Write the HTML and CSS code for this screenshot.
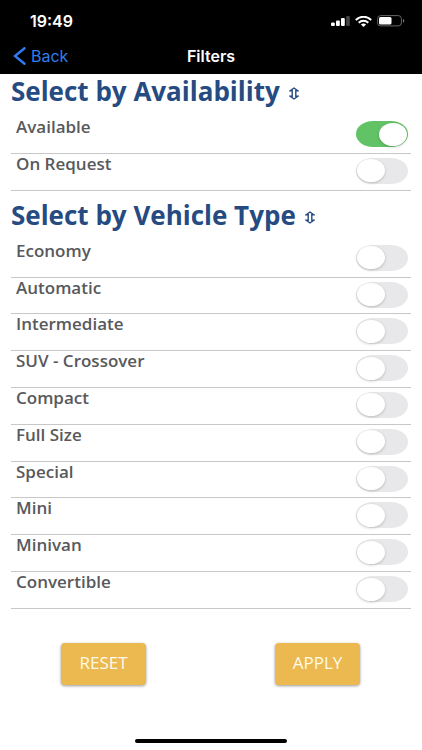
FILE: index.html
```html
<!DOCTYPE html>
<html lang="en">
<head>
<meta charset="utf-8">
<meta name="viewport" content="width=device-width, initial-scale=1">
<title>Filters</title>
<link rel="stylesheet" href="styles.css">
</head>
<body>
<header class="top">
  <div class="status">
    <span class="time">19:49</span>
    <div class="indicators">
      <svg width="19" height="10" viewBox="0 0 19 10" aria-hidden="true"><g fill="#fff"><rect y="6.500" width="3.800" height="3.500" rx="1"/><rect x="5" y="4.500" width="3.800" height="5.500" rx="1"/><rect x="10" y="2" width="3.800" height="8" rx="1"/></g><rect x="15.200" width="3.600" height="10" rx="1" fill="#444"/></svg>
      <svg width="17" height="11" viewBox="0 0 17 11" aria-hidden="true"><g fill="none" stroke="#fff" stroke-width="2"><path d="M.8 4C5-.3 12-.3 16.200 4"/><path d="M3.700 6.700c2.700-2.600 6.900-2.600 9.600 0"/></g><path fill="#fff" d="M5.900 8.500c1.500-1.300 3.700-1.300 5.200 0L8.500 11z"/></svg>
      <svg width="28" height="12" viewBox="0 0 28 12" aria-hidden="true"><rect x=".6" y=".6" width="23.800" height="10.300" rx="3" fill="none" stroke="#666"/><rect x="2" y="2" width="12.500" height="7.500" rx="1.500" fill="#fff"/><path d="M26 4c1.800.5 1.800 3.200 0 3.700z" fill="#777"/></svg>
    </div>
  </div>
  <nav class="bar">
    <a class="back" href="#"><svg width="13" height="18" viewBox="0 0 13 18" aria-hidden="true"><path d="M11.500 1.200 2 9l9.500 7.800" fill="none" stroke="#2f7df0" stroke-width="2.400" stroke-linecap="round"/></svg>Back</a>
    <h1 class="title">Filters</h1>
  </nav>
</header>
<main class="content">
  <h2 class="heading">Select by Availability <svg class="sort" width="10" height="13" viewBox="0 0 10 13" aria-hidden="true"><path d="M5 1 1.200 3.800h2v5.400h-2L5 12l3.800-2.800h-2V3.800h2z"/></svg></h2>
  <ul class="list availability">
    <li class="row"><label for="f1">Available</label><input class="switch" id="f1" type="checkbox" checked></li>
    <li class="row"><label for="f2">On Request</label><input class="switch" id="f2" type="checkbox"></li>
  </ul>
  <h2 class="heading next">Select by Vehicle Type <svg class="sort" width="10" height="13" viewBox="0 0 10 13" aria-hidden="true"><path d="M5 1 1.200 3.800h2v5.400h-2L5 12l3.800-2.800h-2V3.800h2z"/></svg></h2>
  <ul class="list vehicles">
    <li class="row"><label for="v1">Economy</label><input class="switch" id="v1" type="checkbox"></li>
    <li class="row"><label for="v2">Automatic</label><input class="switch" id="v2" type="checkbox"></li>
    <li class="row"><label for="v3">Intermediate</label><input class="switch" id="v3" type="checkbox"></li>
    <li class="row"><label for="v4">SUV - Crossover</label><input class="switch" id="v4" type="checkbox"></li>
    <li class="row"><label for="v5">Compact</label><input class="switch" id="v5" type="checkbox"></li>
    <li class="row"><label for="v6">Full Size</label><input class="switch" id="v6" type="checkbox"></li>
    <li class="row"><label for="v7">Special</label><input class="switch" id="v7" type="checkbox"></li>
    <li class="row"><label for="v8">Mini</label><input class="switch" id="v8" type="checkbox"></li>
    <li class="row"><label for="v9">Minivan</label><input class="switch" id="v9" type="checkbox"></li>
    <li class="row"><label for="v10">Convertible</label><input class="switch" id="v10" type="checkbox"></li>
  </ul>
  <div class="actions">
    <button class="action" type="button">RESET</button>
    <button class="action" type="button">APPLY</button>
  </div>
</main>
<footer class="home"><div class="indicator"></div></footer>
</body>
</html>
```
FILE: styles.css
```css
* { box-sizing: border-box; }
body {
  margin: 0;
  min-height: 100vh;
  display: flex;
  flex-direction: column;
  background: #fff;
  color: #58595c;
  font-family: "Open Sans", sans-serif;
}
.top { background: #000; color: #fff; font-family: Inter, sans-serif; }
.status {
  display: flex;
  justify-content: space-between;
  align-items: center;
  height: 37px;
  padding: 5px 17px 0 30px;
}
.time { font-size: 16px; font-weight: 600; line-height: 20px; }
.indicators { display: flex; align-items: center; gap: 5px; }
.bar {
  display: grid;
  grid-template-columns: 1fr auto 1fr;
  align-items: center;
  height: 37px;
  padding: 0 13px;
}
.back {
  display: flex;
  align-items: center;
  gap: 5px;
  color: #2f7df0;
  font-size: 16px;
  text-decoration: none;
}
.title { margin: 0; font-size: 16px; font-weight: 600; line-height: 20px; }
.content {
  flex: 1;
  display: flex;
  flex-direction: column;
  padding: 0 11px;
}
.heading {
  display: flex;
  align-items: center;
  gap: 9px;
  margin: 0;
  height: 43px;
  padding-bottom: 10px;
  color: #264b82;
  font-size: 26px;
  font-weight: 700;
  line-height: 32px;
}
.next { height: 50px; padding-bottom: 2px; }
.sort { margin-top: 5px; fill: none; stroke: #264b82; stroke-width: 1.400; }
.list {
  display: flex;
  flex-direction: column;
  margin: 0;
  padding: 0;
  list-style: none;
}
.availability { flex: 2 1 0; }
.vehicles { flex: 10 1 0; }
.row {
  flex: 1;
  display: flex;
  justify-content: space-between;
  align-items: flex-start;
  padding: 0 3px 0 5px;
  border-bottom: 1px solid #c8c8c8;
}
.row label { font-size: 17px; font-weight: 600; line-height: 20px; }
.switch {
  appearance: none;
  display: flex;
  align-items: center;
  width: 52px;
  height: 26px;
  margin: 4px 0 0;
  padding: 0 1px;
  border-radius: 17px / 13px;
  background: #e8e8ea;
}
.switch::before {
  content: "";
  width: 28px;
  height: 23px;
  border-radius: 50%;
  background: #fff;
  box-shadow: 0 1px 3px #0003;
}
.switch:checked { justify-content: flex-end; background: #62c366; }
.actions {
  display: flex;
  justify-content: space-between;
  padding: 34px 51px 26px 50px;
}
.action {
  width: 85px;
  height: 42px;
  padding: 0 0 3px;
  border: 0;
  border-radius: 4px;
  background: #ecb850;
  box-shadow: 0 1px 3px #0006;
  color: #fffbe8;
  font-family: "Open Sans", sans-serif;
  font-size: 17px;
}
.home { display: flex; justify-content: center; align-items: flex-start; height: 39px; padding-top: 28px; }
.indicator { width: 36%; height: 4px; border-radius: 2px; background: #000; }
```
